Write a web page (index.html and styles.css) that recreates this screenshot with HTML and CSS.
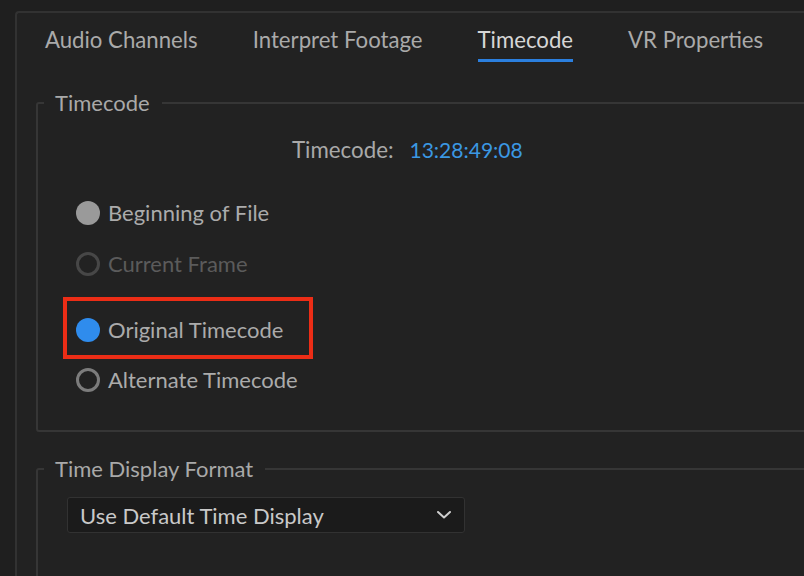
FILE: index.html
```html
<!DOCTYPE html>
<html>
<head>
<meta charset="utf-8">
<link rel="stylesheet" href="styles.css">
</head>
<body>
<div class="panel">
  <div class="tabs">
    <div class="tab">Audio Channels</div>
    <div class="tab">Interpret Footage</div>
    <div class="tab active">Timecode</div>
    <div class="tab">VR Properties</div>
  </div>
  <fieldset class="group group-tc">
    <legend>Timecode</legend>
    <div class="tc-row">
      <span class="tc-label">Timecode:</span>
      <span class="tc-value">13:28:49:08</span>
    </div>
    <div class="radios">
      <div class="radio r1"><span class="dot dot-gray"></span><span>Beginning of File</span></div>
      <div class="radio r2 disabled"><span class="dot dot-ring-dim"></span><span>Current Frame</span></div>
      <div class="radio r3"><span class="dot dot-blue"></span><span>Original Timecode</span><span class="highlight"></span></div>
      <div class="radio r4"><span class="dot dot-ring"></span><span>Alternate Timecode</span></div>
    </div>
  </fieldset>
  <fieldset class="group group-fmt">
    <legend>Time Display Format</legend>
    <div class="select">
      <span>Use Default Time Display</span>
      <svg class="chev" width="14" height="8" viewBox="0 0 14 8"><polyline points="1,1 7,6.5 13,1" fill="none" stroke="#cfcfcf" stroke-width="2" stroke-linecap="round" stroke-linejoin="round"/></svg>
    </div>
  </fieldset>
</div>
</body>
</html>
```
FILE: styles.css
```css
html, body {
  margin: 0;
  padding: 0;
  background: #1f1f1f;
  height: 100%;
  overflow: hidden;
}
body {
  font-family: Lato, "Open Sans", sans-serif;
  color: #a8a8a8;
}
.panel {
  margin: 11px -20px 0 15px;
  border-top: 2px solid #323232;
  border-left: 2px solid #323232;
  border-radius: 4px 0 0 0;
  background: #222222;
  height: calc(100vh - 11px);
  box-sizing: border-box;
  overflow: hidden;
}
.tabs {
  display: flex;
  gap: 55px;
  padding-left: 28px;
  height: 49px;
  padding-top: 13px;
  box-sizing: border-box;
}
.tab {
  font-size: 22.2px;
  line-height: 28px;
  color: #aaaaaa;
  height: 36px;
  box-sizing: border-box;
}
.tab.active {
  color: #d6d6d6;
  border-bottom: 3px solid #2b7fde;
}
.group {
  margin: 0 0 0 19px;
  padding: 0;
  border: 2px solid #363636;
  border-radius: 3px;
  min-width: 0;
}
.group legend {
  margin-left: 6px;
  padding: 0 12px 0 11px;
  font-size: 22px;
  line-height: 26px;
  color: #a9a9a9;
}
.group-tc {
  height: 342px;
  box-sizing: border-box;
  margin-top: 28px;
}
.tc-row {
  display: flex;
  align-items: baseline;
  gap: 16px;
  padding-left: 254px;
  margin-top: 20px;
  line-height: 28px;
}
.tc-label { color: #a9a9a9; font-size: 22.3px; }
.tc-value { color: #3b98e3; font-size: 21px; }
.radios {
  padding-left: 38px;
  margin-top: 35px;
}
.radio {
  position: relative;
  display: flex;
  align-items: center;
  gap: 8px;
  font-size: 22px;
  line-height: 28px;
  height: 28px;
  color: #ababab;
}
.radio.disabled { color: #5b5b5b; }
.r2 { margin-top: 23px; }
.r3 { margin-top: 38px; }
.r4 { margin-top: 22px; }
.dot {
  width: 24px;
  height: 24px;
  border-radius: 50%;
  box-sizing: border-box;
  flex: none;
}
.dot-gray { background: #9a9a9a; }
.dot-blue { background: #2f8ced; }
.dot-ring { border: 3px solid #7c7c7c; }
.dot-ring-dim { border: 3px solid #474747; }
.highlight {
  position: absolute;
  left: -13px;
  top: -19px;
  width: 250px;
  height: 62px;
  border: 4px solid #ec2d16;
  box-sizing: border-box;
}
.group-fmt {
  margin-top: 24px;
  height: 160px;
  box-sizing: border-box;
}
.select {
  margin: 15px 0 0 29px;
  width: 398px;
  height: 36px;
  box-sizing: border-box;
  background: #1b1b1b;
  border: 1px solid #323232;
  border-radius: 3px;
  display: flex;
  align-items: center;
  justify-content: space-between;
  padding: 0 12px 0 12px;
  font-size: 22px;
  color: #c9c9c9;
}
.chev { margin-right: 1px; }
```
